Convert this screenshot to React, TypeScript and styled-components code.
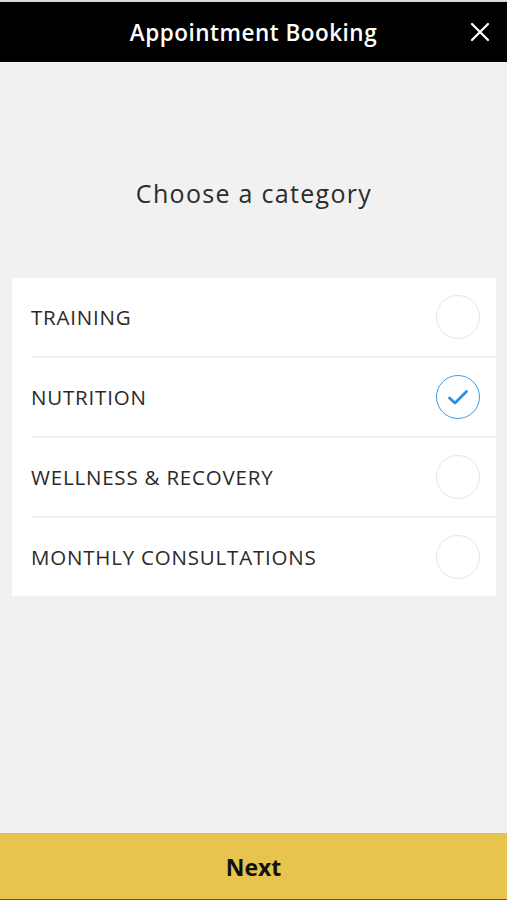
import React, { useState } from "react";
import styled, { createGlobalStyle } from "styled-components";

const GlobalStyle = createGlobalStyle`
  html, body {
    margin: 0;
    padding: 0;
    background: #f1f1f1;
    font-family: "Open Sans", "Liberation Sans", sans-serif;
  }
`;

export const Screen = styled.div`
  display: flex;
  flex-direction: column;
  height: 900px;
  background: #f1f1f1;
  border-top: 2px solid #d8d8d8;
  box-sizing: border-box;
`;

export const Header = styled.div`
  position: relative;
  display: flex;
  align-items: center;
  justify-content: center;
  height: 60px;
  background: #000;
  color: #fff;
`;

export const HeaderTitle = styled.h1`
  margin: 0;
  font-size: 22.5px;
  font-weight: 600;
  letter-spacing: 0.5px;
`;

export const CloseButton = styled.button`
  position: absolute;
  right: 16px;
  top: 50%;
  transform: translateY(-50%);
  display: flex;
  padding: 0;
  border: none;
  background: none;
  color: #fff;
  cursor: pointer;
`;

export const Content = styled.div`
  flex: 1;
  display: flex;
  flex-direction: column;
  padding: 0 11px 0 12px;
`;

export const Heading = styled.h2`
  margin: 114px 0 68px;
  text-align: center;
  font-size: 25px;
  font-weight: 400;
  letter-spacing: 1.3px;
  color: #2b2b2b;
`;

export const Card = styled.div`
  display: flex;
  flex-direction: column;
  background: #fff;
  padding-left: 19px;
`;

export const Row = styled.div<{ last?: boolean }>`
  display: flex;
  align-items: center;
  justify-content: space-between;
  height: 78px;
  padding-right: 16px;
  border-bottom: ${(p) => (p.last ? "none" : "2px solid #efefef")};
  cursor: pointer;
`;

export const RowLabel = styled.span`
  font-size: 20.5px;
  letter-spacing: 0.8px;
  color: #2a2a2a;
`;

export const Radio = styled.div<{ checked: boolean }>`
  display: flex;
  align-items: center;
  justify-content: center;
  width: 42px;
  height: 42px;
  border-radius: 50%;
  border: 1.5px solid ${(p) => (p.checked ? "#3d9ee6" : "#e6e6e6")};
  color: #2b8fde;
`;

export const NextBar = styled.button`
  display: flex;
  align-items: center;
  justify-content: center;
  height: 67px;
  border: none;
  border-top: 1px solid #e2c24a;
  border-bottom: 1px solid #6b5a10;
  background: #e8c34d;
  font-family: inherit;
  font-size: 23px;
  font-weight: 700;
  color: #111;
  cursor: pointer;
`;

const categories = ["TRAINING", "NUTRITION", "WELLNESS & RECOVERY", "MONTHLY CONSULTATIONS"];

export default function App() {
  const [selected, setSelected] = useState(1);
  return (
    <>
      <GlobalStyle />
      <Screen>
        <Header>
          <HeaderTitle>Appointment Booking</HeaderTitle>
          <CloseButton aria-label="Close">
            <svg width="22" height="22" viewBox="0 0 22 22" fill="none" stroke="currentColor" strokeWidth="2.2" strokeLinecap="round">
              <path d="M3 3 L19 19 M19 3 L3 19" />
            </svg>
          </CloseButton>
        </Header>
        <Content>
          <Heading>Choose a category</Heading>
          <Card>
            {categories.map((c, i) => (
              <Row key={c} last={i === categories.length - 1} onClick={() => setSelected(i)}>
                <RowLabel>{c}</RowLabel>
                <Radio checked={selected === i}>
                  {selected === i && (
                    <svg width="24" height="24" viewBox="0 0 24 24" fill="none" stroke="currentColor" strokeWidth="2.8" strokeLinecap="round" strokeLinejoin="round">
                      <path d="M3.5 13 L9 18 L20.5 6.5" />
                    </svg>
                  )}
                </Radio>
              </Row>
            ))}
          </Card>
        </Content>
        <NextBar>Next</NextBar>
      </Screen>
    </>
  );
}
